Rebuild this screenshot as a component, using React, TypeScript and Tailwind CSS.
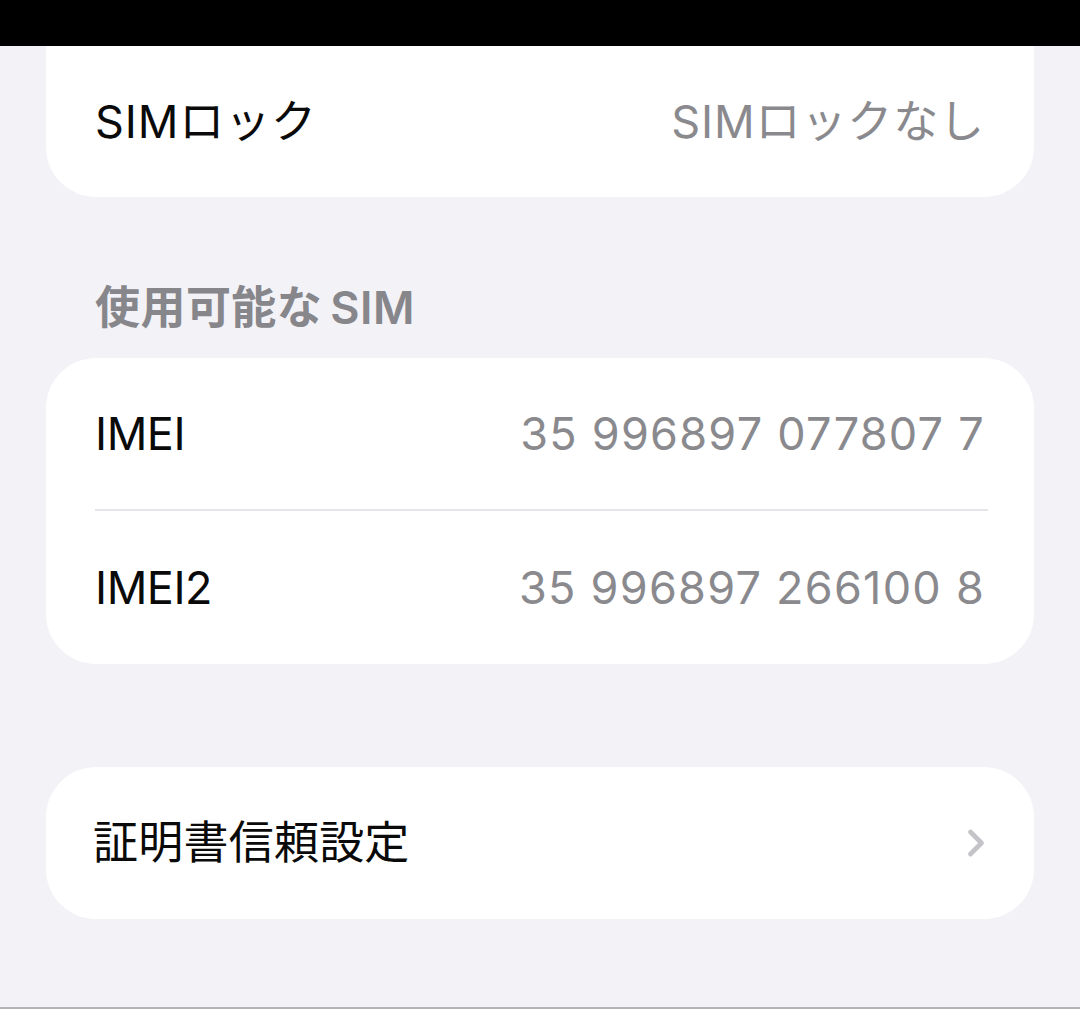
import { ChevronRight } from "lucide-react"

// ─── Data ──────────────────────────────────────────────────────────────────────

const simRows = [
  { label: "IMEI", value: "35 996897 077807 7" },
  { label: "IMEI2", value: "35 996897 266100 8" },
] as const

const font = "font-[Inter,'Noto_Sans_CJK_JP',sans-serif]"

// ─── Component ─────────────────────────────────────────────────────────────────

function Row({ label, value, last }: { label: string; value: string; last?: boolean }) {
  return (
    <div className="flex h-[153px] flex-col px-[49px]">
      <div className="flex flex-1 items-center justify-between">
        <span className="text-[45px] tracking-[-0.01em] text-[#0a0a0a]">{label}</span>
        <span className="text-[45px] tracking-[0.028em] text-[#8a8a8e]">{value}</span>
      </div>
      {!last && <div className="-mr-[3px] h-[2px] bg-[#e4e4e9]" />}
    </div>
  )
}

export default function App() {
  return (
    <div className={`flex h-[1009px] w-[1080px] flex-col bg-[#f2f2f7] ${font}`}>
      {/* Top black bar */}
      <div className="h-[46px] bg-black" />

      {/* SIM lock card (top cut off) */}
      <div className="mx-[46px] flex h-[151px] items-center justify-between rounded-b-[50px] bg-white px-[49px]">
        <span className="text-[45px] tracking-[0.02em] text-[#0a0a0a]">SIMロック</span>
        <span className="text-[45px] tracking-[0.02em] text-[#8a8a8e]">SIMロックなし</span>
      </div>

      {/* Section header */}
      <div className="flex h-[161px] items-end px-[95px] pb-[17px]">
        <h2 className="text-[45px] font-semibold tracking-[0.01em] text-[#86868b]">
          使用可能な<span className="ml-[8px]">SIM</span>
        </h2>
      </div>

      {/* Available SIM card */}
      <div className="mx-[46px] rounded-[50px] bg-white">
        {simRows.map((row, i) => (
          <Row key={row.label} label={row.label} value={row.value} last={i === simRows.length - 1} />
        ))}
      </div>

      {/* Certificate trust */}
      <div className="mx-[46px] mt-[103px] flex h-[152px] items-center justify-between rounded-[50px] bg-white pl-[47px] pr-[36px]">
        <span className="text-[45px] tracking-[0.005em] text-[#0a0a0a]">証明書信頼設定</span>
        <ChevronRight className="h-[44px] w-[44px] text-[#c4c4c8]" strokeWidth={2.6} />
      </div>

      <div className="flex-1" />
      <div className="h-[2px] bg-[#b4b4b8]" />
    </div>
  )
}
